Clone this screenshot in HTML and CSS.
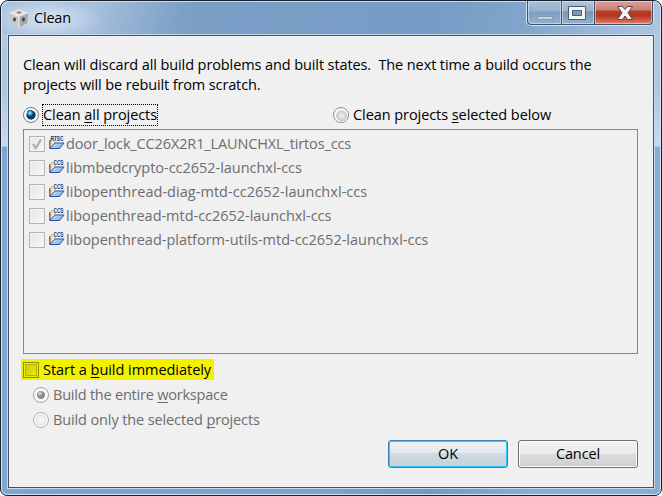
FILE: index.html
```
<!DOCTYPE html>
<html lang="en">
<head>
<meta charset="utf-8">
<title>Clean</title>
<link rel="stylesheet" href="styles.css">
</head>
<body>
<svg width="0" height="0" class="defs" aria-hidden="true">
  <defs>
    <linearGradient id="paper" x1="0" x2="1"><stop offset="0" stop-color="#f0cd7c"/><stop offset="1" stop-color="#fffbe8"/></linearGradient>
    <linearGradient id="flap" x1="0" x2="1" y1="0" y2="1"><stop offset="0" stop-color="#e3f2fd"/><stop offset="1" stop-color="#6fa6e6"/></linearGradient>
    <symbol id="folder" viewBox="0 0 16 16">
      <path d="M1 13V5L3 3.500H5.500V8L2 13Z" fill="url(#paper)" stroke="#b9984c" stroke-width=".6"/>
      <path d="M1 5.500V13.500H10.500L15 8H5.500L1 13.500Z" fill="url(#flap)" stroke="#2850b0" stroke-width="1"/>
      <path d="M1.500 5.500V12.500L5 8V5.500Z" fill="url(#paper)"/>
    </symbol>
  </defs>
</svg>
<div class="window">
  <header class="titlebar">
    <svg class="app" width="20" height="20" viewBox="0 0 20 20">
      <path d="M10 1L19 4.500L18 15L10 19.500L2 15L1 4.500Z" fill="#b5b5b5"/>
      <path d="M10 1L19 4.500L10 8.500L1 4.500Z" fill="#e4e4e4"/>
      <path d="M1 4.500L10 8.500V19.500L2 15Z" fill="#c9c9c9"/>
      <path d="M10 8.500L19 4.500L18 15L10 19.500Z" fill="#a9a9a9"/>
      <ellipse cx="10" cy="4.500" rx="2.400" ry="1.100" fill="#777"/>
      <ellipse cx="5.500" cy="11.500" rx="1.500" ry="2" fill="#444"/>
      <ellipse cx="14.500" cy="11.500" rx="1.500" ry="2" fill="#444"/>
      <path d="M1 4.500L10 8.500L19 4.500M10 8.500V19.500" fill="none" stroke="#f5f5f5" stroke-width=".9"/>
    </svg>
    <h1 class="title">Clean</h1>
    <div class="controls">
      <span class="ctl min"><svg width="33" height="22" viewBox="0 0 33 22"><rect x="9.500" y="15.500" width="15" height="3" fill="#c6d2df" stroke="#8899ad"/></svg></span>
      <span class="ctl max"><svg width="32" height="22" viewBox="0 0 32 22"><path d="M6.500 5.500H23.500V18.500H6.500ZM10.500 9.500V14.500H19.500V9.500Z" fill="#f5f5f5" fill-rule="evenodd" stroke="#4c5a70"/></svg></span>
      <span class="ctl close"><svg width="57" height="22" viewBox="0 0 57 22"><path d="M22.500 5.500H27.500L30 8.500L32.500 5.500H37.500L33 11.800L37.500 18.500H32.500L30 15L27.500 18.500H22.500L27 11.800Z" fill="#f4f4f4" stroke="#5a4654"/></svg></span>
    </div>
  </header>
  <main class="client">
    <p class="msg"><span class="m1">Clean will discard all build problems and built states.&nbsp; The next time a build occurs the</span><br><span class="m2">projects will be rebuilt from scratch.</span></p>
    <div class="modes">
      <label class="opt"><i class="radio on"></i><span class="focus t-all">Clean <u>a</u>ll projects</span></label>
      <label class="opt"><i class="radio"></i><span class="t-sel">Clean projects <u>s</u>elected below</span></label>
    </div>
    <ul class="list">
      <li><i class="check"><svg width="12" height="12" viewBox="0 0 12 12"><path d="M2 6L4.800 10L10 1.500" fill="none" stroke="#aeb0b3" stroke-width="2.300"/></svg></i><svg class="ico" width="16" height="16" viewBox="0 0 16 16"><use href="#folder"/><text x="1.500" y="5.500" class="tag" textLength="13" lengthAdjust="spacingAndGlyphs">RTSC</text></svg><span class="p1">door_lock_CC26X2R1_LAUNCHXL_tirtos_ccs</span></li>
      <li><i class="check"></i><svg class="ico" width="16" height="16" viewBox="0 0 16 16"><use href="#folder"/><text x="4.500" y="5.500" class="tag" textLength="10" lengthAdjust="spacingAndGlyphs">CCS</text></svg><span class="p2">libmbedcrypto-cc2652-launchxl-ccs</span></li>
      <li><i class="check"></i><svg class="ico" width="16" height="16" viewBox="0 0 16 16"><use href="#folder"/><text x="4.500" y="5.500" class="tag" textLength="10" lengthAdjust="spacingAndGlyphs">CCS</text></svg><span class="p3">libopenthread-diag-mtd-cc2652-launchxl-ccs</span></li>
      <li><i class="check"></i><svg class="ico" width="16" height="16" viewBox="0 0 16 16"><use href="#folder"/><text x="4.500" y="5.500" class="tag" textLength="10" lengthAdjust="spacingAndGlyphs">CCS</text></svg><span class="p4">libopenthread-mtd-cc2652-launchxl-ccs</span></li>
      <li><i class="check"></i><svg class="ico" width="16" height="16" viewBox="0 0 16 16"><use href="#folder"/><text x="4.500" y="5.500" class="tag" textLength="10" lengthAdjust="spacingAndGlyphs">CCS</text></svg><span class="p5">libopenthread-platform-utils-mtd-cc2652-launchxl-ccs</span></li>
    </ul>
    <label class="start"><i class="check"></i><span class="t-start">Start a <u>b</u>uild immediately</span></label>
    <label class="opt sub"><i class="radio on off"></i><span class="t-ent">Build the entire <u>w</u>orkspace</span></label>
    <label class="opt sub"><i class="radio off"></i><span class="t-only">Build only the selected <u>p</u>rojects</span></label>
    <footer class="buttons"><button class="btn ok">OK</button><button class="btn cancel">Cancel</button></footer>
  </main>
</div>
</body>
</html>
```
FILE: styles.css
```
* { box-sizing: border-box; }
html, body { margin: 0; width: 662px; height: 496px; overflow: hidden; background: #fff; }
body { font: 14.5px/20px "Open Sans", "Noto Sans", sans-serif; color: #000; }
.defs { position: absolute; }
.window {
  width: 662px; height: 496px; padding: 0 7px 7px 6px;
  border: 1px solid #1b1f28; border-radius: 8px 8px 7px 7px;
  box-shadow: inset 0 0 0 1px #d3e5f6;
  background:
    linear-gradient(#b3cae3 0, #adc6e0 90px, #c9dbee 145px, transparent 146px),
    linear-gradient(90deg, #7ea5cf, #7ba2cb 50%, #7499c0 65%, #89acd3 80%);
}
.titlebar {
  display: flex; align-items: flex-start; height: 34px; margin: 0 -6px 0 -5px; padding-left: 7px;
  border-radius: 6px 6px 0 0;
  background:
    radial-gradient(ellipse 55px 20px at 47px 18px, rgba(220,233,246,.9), rgba(220,233,246,0)),
    linear-gradient(105deg, #aec5df 0, #a7c0dc 90px, #7b9fc7 180px, #779cc5 420px, #81a5cc 510px, #a0bcda 600px, #b2cae2 660px);
  box-shadow: inset 0 1px #cadcef;
}
.app { margin: 7px 5px 0 0; }
.title { margin: 7px 0 0; font-size: 14.5px; line-height: 20px; font-weight: 400; letter-spacing: -.2px; }
.controls { display: flex; margin-left: auto; margin-right: 6px; height: 25px; border: 1px solid #d4e3f1; border-top: 0; border-radius: 0 0 5px 5px; background: #3d526c; padding: 0 1px 1px; gap: 1px; }
.ctl { display: block; height: 23px; background: linear-gradient(#b2c5da 0, #9bb2cc 10px, #7892b0 11px, #91afcd 22px); box-shadow: inset 0 0 0 1px rgba(229,240,251,.55); }
.ctl svg { display: block; }
.min { border-radius: 0 0 0 4px; background: linear-gradient(#a8c0dc 0, #94b0d0 10px, #7d9dc1 11px, #91afd0 22px); }
.close { border-radius: 0 0 4px 0; background: linear-gradient(#dca097 0, #cb8074 9px, #b83a27 10px, #b83622 15px, #d87a5e 22px); }
.client { height: 453px; margin: 0 0 0 1px; width: 646px; border: 1px solid #465264; outline: 1px solid #c8dbee; background: #f0f0f0; padding: 19px 15px 0 14px; display: flex; flex-direction: column; }
.msg { margin: 0; height: 49px; white-space: nowrap; }
.modes { display: grid; grid-template-columns: 310px 1fr; height: 25px; padding-top: 1px; }
.opt { display: flex; height: 20px; align-items: center; white-space: nowrap; gap: 4px; }
.modes .radio { margin-top: -1px; }
.radio { flex: none; width: 16px; height: 16px; border-radius: 50%; border: 1px solid #8c8f92; background: radial-gradient(circle at 54% 55%, #f2f3f4 0, #d9dcdf 3px, #c4c9cd 5px, #fafafa 5.5px); }
.radio.on { background: radial-gradient(circle at 42% 36%, #bdf2ff 0, #3fb0dd 1.5px, #145682 3.2px, rgba(12,45,74,0) 3.3px), radial-gradient(circle, #0f3a5c 0, #0f3a5c 4.2px, #fafafa 5px); border-color: #777b80; }
.radio.off { border-color: #b1b3b5; background: radial-gradient(circle at 50%, #f5f5f6 0, #edeff0 4px, #dcdfe1 5px, #fafafa 5.8px); }
.radio.on.off { border-color: #a2a2a2; background: radial-gradient(circle at 42% 38%, #d8d8d8 0, #b0b0b0 2px, rgba(150,150,150,0) 3px), radial-gradient(circle, #8b8b8b 0, #8b8b8b 3.5px, #fafafa 4.5px); }
u { text-decoration: underline; text-underline-offset: 2px; text-decoration-thickness: 1px; text-decoration-skip-ink: none; }
.focus { outline: 1px dotted #000; }
.m1 { letter-spacing: -.1px; }
.m2 { letter-spacing: -.13px; }
.t-all { letter-spacing: -.06px; }
.t-sel { letter-spacing: -.07px; }
.p1 { letter-spacing: -.13px; }
.p2, .p4 { letter-spacing: -.03px; }
.p3 { letter-spacing: .04px; }
.p5 { letter-spacing: -.01px; }
.t-start { letter-spacing: -.04px; }
.t-ent { letter-spacing: -.22px; }
.t-only { letter-spacing: -.12px; }
.list { list-style: none; margin: 0; padding: 2px 5px; height: 225px; border: 1px solid #828790; color: #6d6d6d; }
.list li { display: flex; align-items: center; height: 24px; white-space: nowrap; }
.check { flex: none; width: 16px; height: 16px; border: 1px solid #b1b3b5; background: linear-gradient(135deg, #e6e8ea, #f7f7f7); box-shadow: inset 0 0 0 1px #f6f6f6; padding: 1px; }
.check svg { display: block; }
.ico { margin: -3px 1px 0 4px; overflow: visible; }
.tag { font: bold 6.5px "Liberation Sans", sans-serif; fill: #104080; }
.start { display: flex; align-items: center; width: 193px; height: 21px; margin: 5px 0 0 -2px; padding-left: 2px; gap: 4px; background: #f2f200; white-space: nowrap; }
.start .check { border-color: #8b8b10; background: linear-gradient(135deg, #c6c600, #efef10); box-shadow: inset 0 0 0 1px #eded00, inset 0 0 0 2px #b5b500; }
.sub { margin: 5px 0 0 10px; color: #6d6d6d; }
.buttons { display: flex; justify-content: flex-end; gap: 10px; margin-top: 10px; }
.btn { width: 120px; height: 28px; padding: 0; font: inherit; color: #000; border: 1px solid #707070; border-radius: 3px; background: linear-gradient(#f2f2f2, #ebebeb 49%, #dddddd 50%, #cfcfcf); box-shadow: inset 0 0 0 1px #fbfbfb; }
.cancel { letter-spacing: -.1px; }
.ok { border-color: #3c7fb1; background: linear-gradient(#eef1f3, #e2e9ed 47%, #d0dbe2 48%, #c5d2da); box-shadow: inset 0 0 0 1px #38c6f4; letter-spacing: -.2px; }
```
